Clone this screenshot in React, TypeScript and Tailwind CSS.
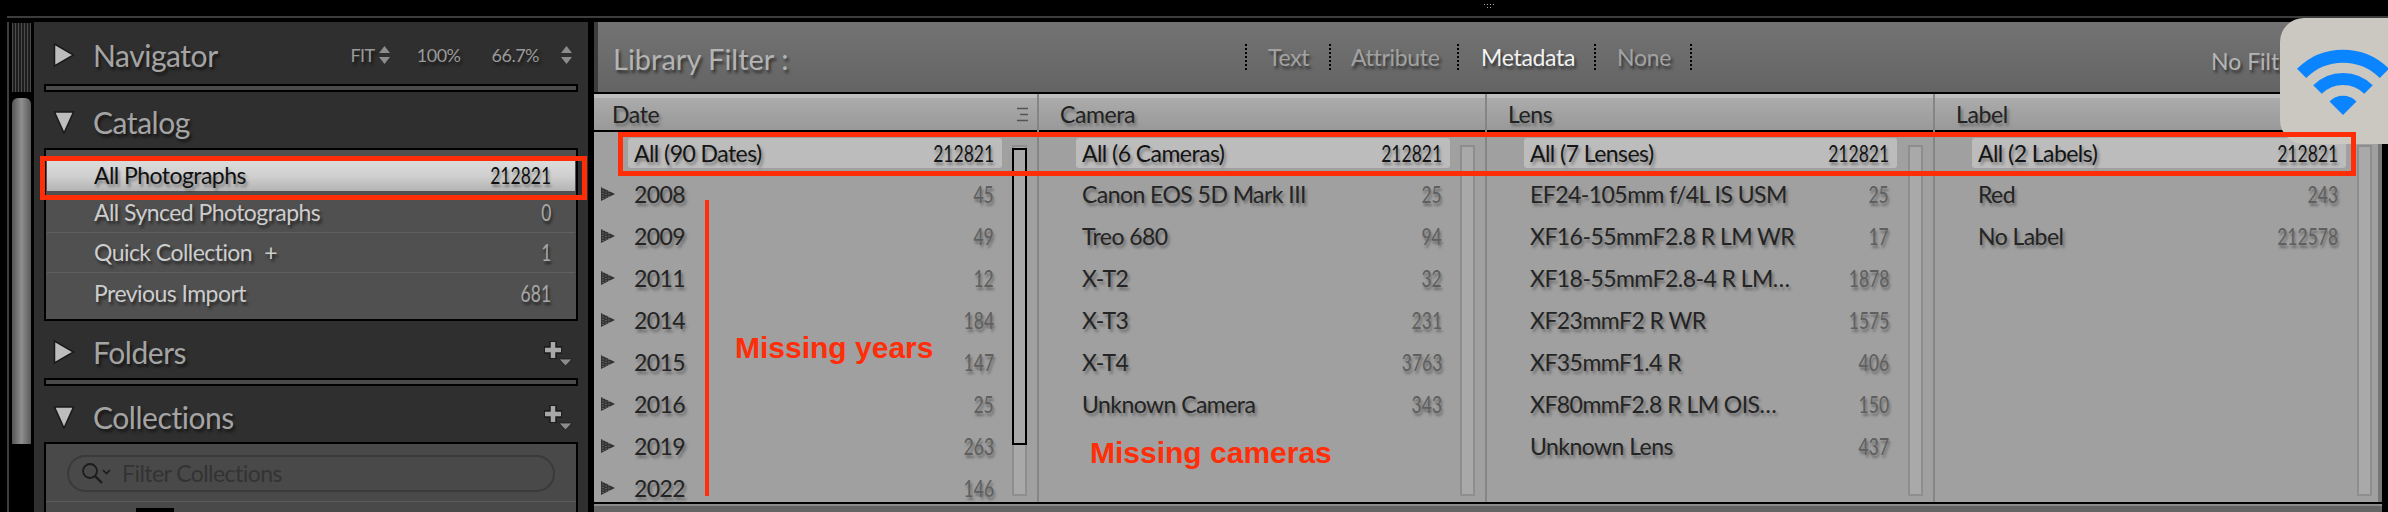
import React from "react";

const shadow = "[text-shadow:2px_3px_3px_rgba(0,0,0,0.55)]";
const softShadow = "[text-shadow:2px_3px_3px_rgba(0,0,0,0.35)]";
const num = "inline-block origin-right scale-x-[0.76]";
const lab = "whitespace-nowrap tracking-[-0.55px]";

function TriRight() {
  return (
    <svg width="22" height="26" viewBox="0 0 22 26" className="shrink-0">
      <polygon points="1.5,2 20.5,13 1.5,24" fill="#bdbdbd" stroke="#1a1a1a" strokeWidth="1.5" />
    </svg>
  );
}
function TriDown() {
  return (
    <svg width="22" height="24" viewBox="0 0 22 24" className="shrink-0">
      <polygon points="1.5,2 20.5,2 11,23" fill="#bdbdbd" stroke="#1a1a1a" strokeWidth="1.5" />
    </svg>
  );
}
function UpDown() {
  return (
    <svg width="11" height="18" viewBox="0 0 11 18" className="shrink-0">
      <polygon points="5.5,0 11,7 0,7" fill="#8c8c8c" />
      <polygon points="0,11 11,11 5.5,18" fill="#8c8c8c" />
    </svg>
  );
}
function Plus() {
  return (
    <svg width="30" height="27" viewBox="0 0 30 27" className="shrink-0">
      <path d="M11 2 V20 M2 11 H20" stroke="#1c1c1c" strokeWidth="8" />
      <path d="M11 3 V19 M3 11 H19" stroke="#a8a8a8" strokeWidth="4.5" />
      <polygon points="17,20 30,20 23.5,27" fill="#8c8c8c" stroke="#1c1c1c" strokeWidth="0.8" />
    </svg>
  );
}
function Sep() {
  return <div className="mx-[10px] h-[8px] border-2 border-black bg-[#4a4a4a]" />;
}
function Header({ open, title, right }: { open?: boolean; title: string; right?: React.ReactNode }) {
  return (
    <div className="flex h-full items-center pl-[19px] pr-[16px] pt-[5px]">
      {open ? <TriDown /> : <TriRight />}
      <span className={`ml-[18px] text-[30px] leading-none tracking-[-0.45px] text-[#a4a4a4] ${shadow}`}>{title}</span>
      <div className="ml-auto flex items-center">{right}</div>
    </div>
  );
}
function CatRow({ label, count, last, children }: { label: string; count: string; last?: boolean; children?: React.ReactNode }) {
  return (
    <div className={`mx-[1px] flex h-[40px] items-center pl-[47px] pr-[24px] text-[23px] text-[#cdcdcd] ${shadow} ${last ? "" : "border-b border-[#606060]"}`}>
      <span className={lab}>{label}</span>
      {children}
      <span className={`ml-auto text-[#a8a8a8] ${num}`}>{count}</span>
    </div>
  );
}

type Row = { label: string; count: string };

function FilterColumn({
  title, all, rows, tri, indent, barGap, headPad, edge, focus, headIcon,
}: {
  title: string; all: Row; rows: Row[]; tri?: boolean; indent: string; barGap: string; headPad: string; edge: string; focus?: boolean; headIcon?: boolean;
}) {
  return (
    <div className={`flex min-w-0 flex-col ${edge}`}>
      <div className={`flex h-[36px] items-center border-t-[4px] border-[#bdbdbd] bg-gradient-to-b from-[#ababab] to-[#999999] ${headPad} pr-[8px]`}>
        <span className={`text-[23px] tracking-[-0.4px] text-[#222222] ${softShadow}`}>{title}</span>
        {headIcon && (
          <svg width="13" height="15" viewBox="0 0 13 15" className="ml-auto">
            <path d="M1 1.5 H12 M4 7.5 H12 M1 13.5 H12" stroke="#555555" strokeWidth="1.6" />
          </svg>
        )}
      </div>
      <div className="h-[2px] bg-black" />
      <div className="flex min-h-0 flex-1 bg-[#a0a0a0]">
        <div className="min-w-0 flex-1">
          <div className="mt-[6px] flex h-[30px]">
            <div className={`${indent} shrink-0`} />
            <div className={`flex flex-1 items-center rounded-[3px] bg-[#bcbcbc] pl-[6px] pr-[8px] text-[23px] text-[#141414] ${softShadow}`}>
              <span className={lab}>{all.label}</span>
              <span className={`ml-auto ${num}`}>{all.count}</span>
            </div>
          </div>
          <div className="mt-[5px]">
            {rows.map((r) => (
              <div key={r.label} className="flex h-[42px]">
                <div className={`${indent} flex shrink-0 items-center pl-[7px]`}>
                  {tri && (
                    <svg width="14" height="14" viewBox="0 0 14 14">
                      <polygon points="0,0 14,7 0,14" fill="#333333" />
                      <path d="M2 1 V13 M5 2 V12 M8 4 V10" stroke="#8a8a8a" strokeWidth="1" strokeDasharray="1 1.5" />
                    </svg>
                  )}
                </div>
                <div className={`flex flex-1 items-center pl-[6px] pr-[8px] text-[23px] text-[#242424] ${softShadow}`}>
                  <span className={lab}>{r.label}</span>
                  <span className={`ml-auto text-[#5f5f5f] ${num}`}>{r.count}</span>
                </div>
              </div>
            ))}
          </div>
        </div>
        <div className={`${barGap} mt-[13px] mb-[13px] w-[15px] shrink-0 border-2 border-[#8e8e8e] bg-[#a9a9a9]`}>
          {focus && <div className="-mx-[2px] mt-[1px] h-[297px] border-2 border-black" />}
        </div>
      </div>
    </div>
  );
}

export default function App() {
  return (
    <div className="relative h-[512px] w-[2388px] overflow-hidden bg-black font-['Lato',sans-serif]">
      {/* window chrome */}
      <div className="flex h-[22px] flex-col">
        <div className="h-[16px] pl-[1484px] pt-[4px]">
          <svg width="10" height="4" viewBox="0 0 10 4"><path d="M0 .5 H1 M3 .5 H4 M6 .5 H7 M9 .5 H10 M3 3.5 H4 M6 3.5 H7" stroke="#aaaaaa" strokeWidth="1" /></svg>
        </div>
        <div className="ml-[7px] h-[2px] bg-[#3c3c3c]" />
      </div>

      <div className="flex h-[490px]">
        {/* left gutter */}
        <div className="ml-[7px] w-[2px] bg-[#3c3c3c]" />
        <div className="ml-[3px] flex w-[19px] flex-col">
          <div className="mt-[1px] h-[69px] bg-[repeating-linear-gradient(90deg,#4c4c4c_0_1px,#1e1e1e_1px_3px)]" />
          <div className="mt-[6px] h-[346px] rounded-t-[6px] bg-gradient-to-r from-[#565656] via-[#8f8f8f] to-[#5a5a5a]" />
        </div>
        <div className="w-[3px]" />

        {/* left panel */}
        <div className="flex w-[554px] flex-col bg-[#2f2f2f]">
          <div className="h-[62px]">
            <Header
              title="Navigator"
              right={
                <div className={`flex items-center text-[18px] tracking-[-0.5px] text-[#9a9a9a] ${shadow}`}>
                  <span>FIT</span>
                  <span className="ml-[4px]"><UpDown /></span>
                  <span className="ml-[27px]">100%</span>
                  <span className="ml-[31px]">66.7%</span>
                  <span className="ml-[22px]"><UpDown /></span>
                </div>
              }
            />
          </div>
          <Sep />
          <div className="h-[57px]">
            <Header open title="Catalog" />
          </div>
          <div className="mx-[10px] h-[174px] border-2 border-black bg-[#505050]">
            <div className={`mx-[1px] mt-[10px] flex h-[31px] items-center bg-gradient-to-b from-[#dcdcdc] via-[#d0d0d0] to-[#b4b4b4] pl-[47px] pr-[24px] text-[23px] text-[#101010] ${softShadow}`}>
              <span className={lab}>All Photographs</span>
              <span className={`ml-auto ${num}`}>212821</span>
            </div>
            <div className="mt-[2px]">
              <CatRow label="All Synced Photographs" count="0" />
              <CatRow label="Quick Collection" count="1">
                <span className="ml-[12px]">+</span>
              </CatRow>
              <CatRow label="Previous Import" count="681" last />
            </div>
          </div>
          <div className="h-[58px]">
            <Header title="Folders" right={<Plus />} />
          </div>
          <Sep />
          <div className="h-[56px]">
            <Header open title="Collections" right={<Plus />} />
          </div>
          <div className="mx-[10px] flex-1 border-2 border-b-0 border-black bg-[#494949]">
            <div className="mx-[21px] mt-[11px] flex h-[37px] items-center rounded-full border-2 border-[#3a3a3a] pl-[11px]">
              <svg width="32" height="26" viewBox="0 0 32 26" className="shrink-0">
                <circle cx="10" cy="10" r="7" fill="none" stroke="#1c1c1c" strokeWidth="1.8" />
                <path d="M15 15 L22 22" stroke="#1c1c1c" strokeWidth="2.4" />
                <path d="M23 9 L26.5 12.5 L30 9" fill="none" stroke="#1c1c1c" strokeWidth="1.6" />
              </svg>
              <span className={`ml-[10px] text-[23px] text-[#333333] ${lab}`}>Filter Collections</span>
            </div>
            <div className="mt-[9px] h-[1px] bg-[#5a5a5a]" />
            <div className="ml-[90px] mt-[6px] h-[4px] w-[38px] bg-black" />
          </div>
        </div>

        <div className="w-[6px]" />

        {/* main */}
        <div className="flex w-[1788px] flex-col">
          <div className="flex h-[70px] items-center border-l-[4px] border-[#3d3d3d] bg-gradient-to-b from-[#737373] to-[#646464] pl-[15px]">
            <span className={`w-[632px] pt-[4px] text-[29px] text-[#b4b4b4] ${shadow}`}>Library Filter :</span>
            <div className={`flex items-center text-[23px] tracking-[-0.3px] text-[#a2a2a2] ${shadow}`}>
              <span className="h-[26px] border-l-2 border-dotted border-black" />
              <span className="ml-[21px] w-[61px]">Text</span>
              <span className="h-[26px] border-l-2 border-dotted border-black" />
              <span className="ml-[20px] w-[106px]">Attribute</span>
              <span className="h-[26px] border-l-2 border-dotted border-black" />
              <span className="ml-[22px] w-[113px] text-[#f2f2f2]">Metadata</span>
              <span className="h-[26px] border-l-2 border-dotted border-black" />
              <span className="ml-[21px] w-[73px]">None</span>
              <span className="h-[26px] border-l-2 border-dotted border-black" />
            </div>
            <span className={`ml-auto w-[171px] whitespace-nowrap pt-[8px] text-[23px] text-[#b4b4b4] ${shadow}`}>No Filter</span>
          </div>
          <div className="h-[2px] bg-black" />
          <div className="grid h-[408px] grid-cols-[445px_448px_448px_447px]">
            <FilterColumn
              title="Date"
              headIcon
              edge="border-r-2 border-[#858585]"
              focus
              tri
              indent="w-[34px]"
              barGap="ml-[10px] mr-[10px]"
              headPad="pl-[18px]"
              all={{ label: "All (90 Dates)", count: "212821" }}
              rows={[
                { label: "2008", count: "45" },
                { label: "2009", count: "49" },
                { label: "2011", count: "12" },
                { label: "2014", count: "184" },
                { label: "2015", count: "147" },
                { label: "2016", count: "25" },
                { label: "2019", count: "263" },
                { label: "2022", count: "146" },
              ]}
            />
            <FilterColumn
              title="Camera"
              edge="border-r-2 border-[#858585]"
              indent="w-[37px]"
              barGap="ml-[10px] mr-[10px]"
              headPad="pl-[21px]"
              all={{ label: "All (6 Cameras)", count: "212821" }}
              rows={[
                { label: "Canon EOS 5D Mark III", count: "25" },
                { label: "Treo 680", count: "94" },
                { label: "X-T2", count: "32" },
                { label: "X-T3", count: "231" },
                { label: "X-T4", count: "3763" },
                { label: "Unknown Camera", count: "343" },
              ]}
            />
            <FilterColumn
              title="Lens"
              edge="border-r-2 border-[#858585]"
              indent="w-[37px]"
              barGap="ml-[11px] mr-[10px]"
              headPad="pl-[21px]"
              all={{ label: "All (7 Lenses)", count: "212821" }}
              rows={[
                { label: "EF24-105mm f/4L IS USM", count: "25" },
                { label: "XF16-55mmF2.8 R LM WR", count: "17" },
                { label: "XF18-55mmF2.8-4 R LM…", count: "1878" },
                { label: "XF23mmF2 R WR", count: "1575" },
                { label: "XF35mmF1.4 R", count: "406" },
                { label: "XF80mmF2.8 R LM OIS…", count: "150" },
                { label: "Unknown Lens", count: "437" },
              ]}
            />
            <FilterColumn
              title="Label"
              edge="border-r-[4px] border-[#777777]"
              indent="w-[37px]"
              barGap="ml-[11px] mr-[6px]"
              headPad="pl-[21px]"
              all={{ label: "All (2 Labels)", count: "212821" }}
              rows={[
                { label: "Red", count: "243" },
                { label: "No Label", count: "212578" },
              ]}
            />
          </div>
          <div className="h-[2px] bg-black" />
          <div className="h-[2px] bg-[#8a8a8a]" />
          <div className="flex-1 bg-[#646464]" />
        </div>
      </div>

      {/* wifi notification */}
      <div className="absolute left-[2280px] top-[18px] h-[126px] w-[130px] rounded-[24px] bg-[#cbc7c1]">
        <svg width="130" height="126" viewBox="0 0 130 126" fill="none">
          <path d="M21.6 55.4 A 58.5 58.5 0 0 1 104.4 55.4" stroke="#0a84ff" strokeWidth="13" />
          <path d="M37.5 71.5 A 36 36 0 0 1 88.5 71.5" stroke="#0a84ff" strokeWidth="12" />
          <path d="M63 97 L49.5 83.5 A 19 19 0 0 1 76.5 83.5 Z" fill="#0a84ff" />
        </svg>
      </div>

      {/* annotations */}
      <div className="absolute left-[40px] top-[156px] h-[44px] w-[547px] border-[5px] border-[#ff2d08]" />
      <div className="absolute left-[618px] top-[132px] h-[44px] w-[1738px] border-[5px] border-[#ff2d08]" />
      <div className="absolute left-[705px] top-[200px] h-[296px] w-[4px] bg-[#ff2d08]" />
      <div className="absolute left-[735px] top-[332px] font-['Liberation_Sans',sans-serif] text-[30px] leading-[32px] font-bold text-[#ff2d08]">Missing years</div>
      <div className="absolute left-[1090px] top-[437px] font-['Liberation_Sans',sans-serif] text-[30px] leading-[32px] font-bold text-[#ff2d08]">Missing cameras</div>
    </div>
  );
}
